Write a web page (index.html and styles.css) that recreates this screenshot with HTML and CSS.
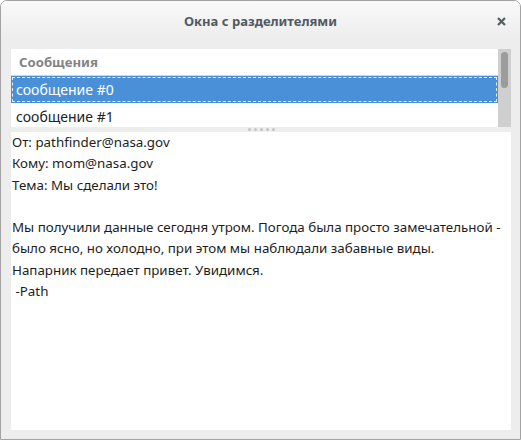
FILE: index.html
```html
<!DOCTYPE html>
<html lang="ru">
<head>
<meta charset="utf-8">
<title>Окна с разделителями</title>
<link rel="stylesheet" href="styles.css">
</head>
<body>
<div class="window">
  <div class="titlebar">
    <span class="title">Окна с разделителями</span>
    <span class="close">
      <svg width="9" height="9" viewBox="0 0 9 9"><path d="M1 1 L8 8 M8 1 L1 8" stroke="#535d62" stroke-width="2.2" stroke-linecap="butt"/></svg>
    </span>
  </div>
  <div class="content">
    <div class="listpane">
      <div class="list">
        <div class="header">Сообщения</div>
        <div class="row selected"><span class="focus">сообщение #0</span></div>
        <div class="row">сообщение #1</div>
      </div>
      <div class="scrollbar"><div class="slider"></div></div>
    </div>
    <div class="handle">
      <span class="dot"></span><span class="dot"></span><span class="dot"></span><span class="dot"></span><span class="dot"></span>
    </div>
    <div class="textview">
      <div class="line">От: pathfinder@nasa.gov</div>
      <div class="line">Кому: mom@nasa.gov</div>
      <div class="line">Тема: Мы сделали это!</div>
      <div class="line">&nbsp;</div>
      <div class="line">Мы получили данные сегодня утром. Погода была просто замечательной -</div>
      <div class="line">было ясно, но холодно, при этом мы наблюдали забавные виды.</div>
      <div class="line">Напарник передает привет. Увидимся.</div>
      <div class="line">&nbsp;-Path</div>
    </div>
  </div>
</div>
</body>
</html>
```
FILE: styles.css
```css
html, body {
  margin: 0;
  padding: 0;
  background: #ffffff;
}
body {
  font-family: "Noto Sans", "Open Sans", sans-serif;
}
.window {
  width: 521px;
  height: 440px;
  box-sizing: border-box;
  border: 1px solid #a3a3a3;
  border-radius: 7px 7px 0 0;
  background: #ededed;
  display: flex;
  flex-direction: column;
  overflow: hidden;
}
.titlebar {
  height: 38px;
  flex: none;
  background: linear-gradient(#f9f9f9, #ededed);
  display: flex;
  align-items: center;
  justify-content: center;
  position: relative;
}
.title {
  font-weight: bold;
  font-size: 13px;
  color: #4f5a62;
  margin-top: 1px;
}
.close {
  position: absolute;
  left: 496px;
  top: 16px;
  width: 9px;
  height: 9px;
  display: flex;
}
.content {
  flex: 1;
  padding: 10px 9px 9px 10px;
  display: flex;
  flex-direction: column;
  min-height: 0;
}
.listpane {
  height: 78px;
  flex: none;
  display: flex;
}
.list {
  flex: 1;
  background: #ffffff;
  overflow: hidden;
}
.header {
  height: 27px;
  box-sizing: border-box;
  border-bottom: 1px solid #d4d4d4;
  padding-left: 8px;
  font-size: 13.2px;
  font-weight: bold;
  color: #848484;
  display: flex;
  align-items: center;
}
.row {
  height: 27px;
  font-size: 14px;
  color: #222222;
  display: flex;
  align-items: center;
  padding-left: 5px;
  box-sizing: border-box;
}
.row.selected {
  background: #4a90d9;
  color: #ffffff;
  padding: 1px;
}
.focus {
  flex: 1;
  align-self: stretch;
  border: 1px dashed rgba(255,255,255,0.85);
  display: flex;
  align-items: center;
  padding-left: 3px;
}
.scrollbar {
  width: 13px;
  flex: none;
  background: #cfcfcf;
  padding: 3px 3px 0 3px;
  box-sizing: border-box;
}
.slider {
  height: 36px;
  background: #9c9c9c;
  border-radius: 4px;
}
.handle {
  height: 5px;
  flex: none;
  display: flex;
  justify-content: center;
  align-items: center;
  gap: 3px;
}
.dot {
  width: 3px;
  height: 3px;
  border-radius: 50%;
  background: #c4c4c4;
}
.textview {
  flex: 1;
  background: #ffffff;
  padding: 0 0 0 1px;
  font-size: 13.35px;
  line-height: 21.3px;
  color: #1e1e1e;
}
.line {
  white-space: pre;
}
```
